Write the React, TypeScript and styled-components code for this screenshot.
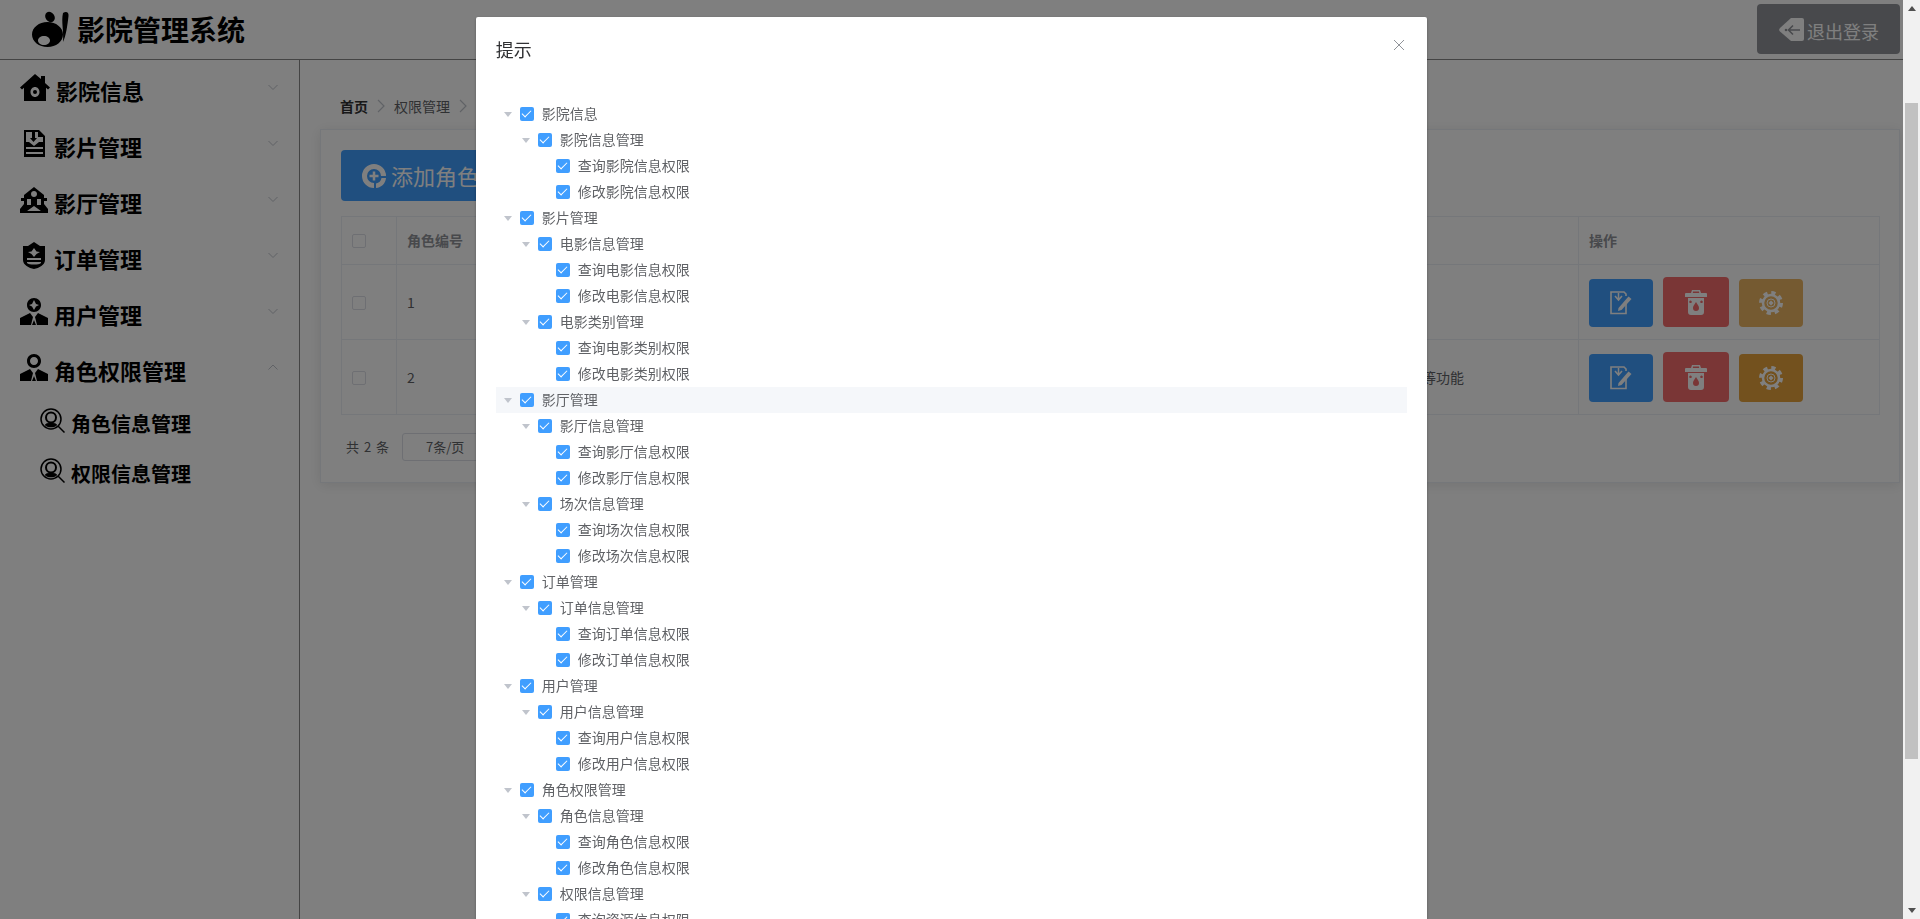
import React, { useLayoutEffect, useRef } from 'react';
import styled, { createGlobalStyle } from 'styled-components';

const Global = createGlobalStyle`
  html, body { margin: 0; padding: 0; height: 100%; overflow: hidden; background: #fff; }
  body { font-family: "Noto Sans CJK SC", "Liberation Sans", sans-serif; }
  * { box-sizing: border-box; }
`;

const Page = styled.div`
  width: 1903px;
  height: 100vh;
  display: flex;
  flex-direction: column;
  overflow: hidden;
`;
const Header = styled.header`
  height: 60px;
  flex: none;
  display: flex;
  align-items: center;
  justify-content: space-between;
  padding: 0 3px 1px 32px;
  border-bottom: 1px solid #888;
`;
const Brand = styled.div`
  display: flex;
  align-items: center;
  gap: 8px;
  font-size: 28px;
  font-weight: 700;
  color: #000;
`;
const BrandText = styled.span`
  line-height: 36px;
  margin-top: -1px;
`;
const LogoutButton = styled.button`
  width: 143px;
  height: 50px;
  border: 0;
  border-radius: 4px;
  background: #909399;
  color: #fff;
  font: 18px "Noto Sans CJK SC", sans-serif;
  display: flex;
  align-items: center;
  justify-content: center;
  gap: 3px;
  padding: 0 0 0 1px;
`;
const LogoutLabel = styled.span`
  padding-top: 3px;
`;
const Body = styled.div`
  flex: 1;
  display: flex;
  min-height: 0;
`;
const Sidebar = styled.nav`
  width: 300px;
  flex: none;
  border-right: 1px solid #888;
`;
const MenuItem = styled.div`
  height: 56px;
  display: flex;
  align-items: center;
  padding: 0 19px 0 20px;
  color: #000;
  font-size: 22px;
  font-weight: 700;
`;
const SubItem = styled.div`
  height: 50px;
  display: flex;
  align-items: center;
  padding-left: 40px;
  color: #000;
  font-size: 20px;
  font-weight: 700;
`;
const IconSlot = styled.span<{ $w: number; $ml?: number }>`
  width: ${p => p.$w}px;
  margin-left: ${p => p.$ml ?? 0}px;
  flex: none;
  display: flex;
  align-items: center;
  margin-top: -1px;
`;
const Label = styled.span`
  flex: 1;
  padding-top: 3px;
  line-height: 30px;
  white-space: nowrap;
`;
const SubLabel = styled(Label)`
  padding-top: 5px;
`;
const Chevron = styled.svg`
  width: 14px;
  height: 14px;
  flex: none;
  fill: none;
  stroke: #c0c4cc;
  stroke-width: 1;
  margin-top: -3px;
`;
const Main = styled.main`
  flex: 1;
  min-width: 0;
  padding: 36px 3px 0 20px;
`;
const Breadcrumb = styled.div`
  display: flex;
  align-items: center;
  height: 20px;
  padding-left: 20px;
  margin-bottom: 13px;
  font-size: 14px;
  color: #606266;
`;
const Crumb = styled.span<{ $strong?: boolean }>`
  color: ${p => (p.$strong ? '#303133' : '#606266')};
  font-weight: ${p => (p.$strong ? 700 : 400)};
`;
const CrumbSep = styled.svg`
  width: 14px;
  height: 14px;
  margin: 0 6px;
  fill: none;
  stroke: #c0c4cc;
  stroke-width: 1.2;
`;
const Card = styled.section`
  height: 354px;
  border: 1px solid #ebeef5;
  background: #fff;
  padding: 20px;
  box-shadow: 0 2px 12px rgba(0, 0, 0, 0.1);
`;
const AddButton = styled.button`
  width: 170px;
  height: 51px;
  border: 0;
  border-radius: 4px;
  background: #409eff;
  color: #fff;
  font: 22px "Noto Sans CJK SC", sans-serif;
  display: flex;
  align-items: center;
  gap: 5px;
  padding: 0 0 0 21px;
  margin-bottom: 15px;
`;
const AddLabel = styled.span`
  padding-bottom: 2px;
`;
const Table = styled.table`
  width: 100%;
  table-layout: fixed;
  border-collapse: collapse;
  font-size: 14px;
  color: #606266;
  border: 1px solid #ebeef5;
`;
const HeadCell = styled.th`
  height: 48px;
  padding: 0 10px 2px;
  text-align: left;
  border: 1px solid #ebeef5;
  color: #909399;
  font-weight: 700;
  white-space: nowrap;
`;
const Cell = styled.td`
  height: 75px;
  padding: 0 10px;
  border: 1px solid #ebeef5;
  white-space: nowrap;
`;
const Box = styled.span<{ $drop?: number }>`
  display: block;
  width: 14px;
  height: 14px;
  margin-top: ${p => p.$drop ?? 0}px;
  border: 1px solid #dcdfe6;
  border-radius: 2px;
  background: #fff;
`;
const Actions = styled.div`
  display: flex;
  align-items: flex-end;
  gap: 10px;
`;
const ActionButton = styled.button<{ $bg: string; $w: number; $h: number }>`
  width: ${p => p.$w}px;
  height: ${p => p.$h}px;
  background: ${p => p.$bg};
  border: 0;
  border-radius: 4px;
  display: flex;
  align-items: center;
  justify-content: center;
  padding: 0;
`;
const Pager = styled.div`
  display: flex;
  align-items: center;
  margin-top: 18px;
  padding-left: 5px;
  font-size: 13px;
  color: #606266;
`;
const PagerTotal = styled.span`
  width: 56px;
  word-spacing: 2px;
  padding-bottom: 2px;
`;
const PagerSelect = styled.div`
  width: 100px;
  height: 28px;
  border: 1px solid #dcdfe6;
  border-radius: 3px;
  display: flex;
  align-items: center;
  padding: 0 0 2px 23px;
`;

const Overlay = styled.div`
  position: fixed;
  top: 0;
  left: 0;
  bottom: 0;
  right: 17px;
  background: rgba(0, 0, 0, 0.5);
  overflow-y: scroll;
  padding: 138px 0 56px;
`;
const ScrollRail = styled.div`
  position: fixed;
  top: 0;
  right: 0;
  bottom: 0;
  width: 17px;
  background: #f1f1f1;
  display: flex;
  flex-direction: column;
`;
const ScrollArrow = styled.div<{ $down?: boolean }>`
  height: 17px;
  flex: none;
  display: flex;
  align-items: center;
  justify-content: center;
  &::before {
    content: '';
    border-left: 4.5px solid transparent;
    border-right: 4.5px solid transparent;
    ${p => (p.$down ? 'border-top: 5px solid #505050;' : 'border-bottom: 5px solid #505050;')}
  }
`;
const ScrollTrack = styled.div`
  flex: 1;
  padding: 86px 2px 0;
`;
const ScrollThumb = styled.div`
  height: 656px;
  background: #c1c1c1;
`;
const Dialog = styled.div`
  width: 50%;
  margin: 0 auto;
  background: #fff;
  border-radius: 2px;
  box-shadow: 0 1px 3px rgba(0, 0, 0, 0.3);
`;
const DialogHeader = styled.div`
  height: 54px;
  padding: 20px 20px 10px;
  display: flex;
  align-items: center;
  justify-content: space-between;
`;
const DialogTitle = styled.span`
  font-size: 18px;
  line-height: 24px;
  color: #303133;
`;
const CloseIcon = styled.svg`
  width: 16px;
  height: 16px;
  stroke: #909399;
  stroke-width: 1;
  fill: none;
  margin: -9px 0 0 0;
`;
const DialogBody = styled.div`
  padding: 30px 20px;
`;
const TreeRow = styled.div<{ $level: number; $hover?: boolean }>`
  height: 26px;
  display: flex;
  align-items: center;
  padding-left: ${p => p.$level * 18}px;
  font-size: 14px;
  color: #606266;
  background: ${p => (p.$hover ? '#f5f7fa' : 'transparent')};
`;
const Caret = styled.span<{ $leaf?: boolean }>`
  width: 24px;
  flex: none;
  display: flex;
  justify-content: center;
  &::before {
    content: '';
    border-left: 4px solid transparent;
    border-right: 4px solid transparent;
    border-top: 5px solid ${p => (p.$leaf ? 'transparent' : '#c0c4cc')};
  }
`;
const TreeCheck = styled.span`
  position: relative;
  width: 14px;
  height: 14px;
  flex: none;
  border-radius: 2px;
  background: #409eff;
  margin-right: 8px;
  &::after {
    content: '';
    position: absolute;
    left: 4px;
    top: 1px;
    width: 4px;
    height: 8px;
    border: 1px solid #fff;
    border-left: 0;
    border-top: 0;
    transform: rotate(45deg);
  }
`;
const TreeText = styled.span`
  padding-bottom: 2px;
`;
const DialogFooter = styled.div`
  padding: 10px 20px 20px;
  display: flex;
  justify-content: flex-end;
  gap: 10px;
`;
const FooterButton = styled.button<{ $primary?: boolean }>`
  height: 40px;
  width: 98px;
  font: 14px "Noto Sans CJK SC", sans-serif;
  border-radius: 4px;
  border: 1px solid ${p => (p.$primary ? '#409eff' : '#dcdfe6')};
  background: ${p => (p.$primary ? '#409eff' : '#fff')};
  color: ${p => (p.$primary ? '#fff' : '#606266')};
`;

const Logo = () => (
  <svg width="37" height="36" viewBox="0 0 37 36" fill="#000">
    <path fillRule="evenodd" d="M15.5 11C24 11 31 16.500 31 23.500S24 36 15.500 36 0 30.500 0 23.500 7 11 15.500 11ZM12 25C8.700 25 6 27 6 29.500S8.700 34 12 34s6-2 6-4.500S15.300 25 12 25Z" />
    <ellipse cx="18" cy="6" rx="4.500" ry="5.500" transform="rotate(-35 18 6)" />
    <path d="M31 2C34 0 37 1 36.500 5 35.500 14 34 25 31 31 32 21 29 10 31 2Z" />
  </svg>
);
const HomeIcon = () => (
  <svg width="30" height="27" viewBox="0 0 30 27" fill="#000">
    <path fillRule="evenodd" d="M15 0 21 5V2H25V9L30 13.500 28 15.500 26 13.800V27H4V13.800L2 15.500 0 13.500ZM15 13C12.500 13 10.500 15.200 10.500 18S12.500 23 15 23 19.500 20.800 19.500 18 17.500 13 15 13Z" />
    <circle cx="15" cy="18" r="2" />
  </svg>
);
const DocIcon = () => (
  <svg width="21" height="27" viewBox="0 0 21 27" fill="#000">
    <path fillRule="evenodd" d="M0 0H15L21 6V27H0ZM2 2V12H5L10 16 15 12H19V7H14V2H11V8H13L9.500 12 6 8H8V2ZM2 17V19H19V17ZM2 22V24H19V22Z" />
  </svg>
);
const HallIcon = () => (
  <svg width="28" height="26" viewBox="0 0 28 26" fill="#000">
    <path fillRule="evenodd" d="M14 0 24 8V11H27V14H24V17L28 22V26H0V22L4 17V14H1V11H4V8ZM14 4C12.300 4 11 5.300 11 7S12.300 10 14 10 17 8.700 17 7 15.700 4 14 4ZM7 12V18H11V12ZM17 12V18H21V12ZM14 19 7 24H21Z" />
  </svg>
);
const ShieldIcon = () => (
  <svg width="24" height="27" viewBox="0 0 24 27" fill="#000">
    <path fillRule="evenodd" d="M12 0 18 4 23 4V18C23 23 17 26 12 27 7 26 1 23 1 18V4L6 4ZM12 6 9.500 9.500 6 10 9.500 12 12 15 14.500 12 18 10 14.500 9.500ZM5 16V18H19V16ZM5 20V21C7 23 17 23 19 21V20Z" />
  </svg>
);
const UserIcon = ({ star }: { star?: boolean }) => (
  <svg width="28" height="27" viewBox="0 0 28 27" fill="#000">
    <path
      fillRule="evenodd"
      d={
        star
          ? 'M14 0C18 0 21 3 21 7S18 14 14 14 7 11 7 7 10 0 14 0ZM14 2 12 6 9 7 12 8.500 14 12 16 8.500 19 7 16 6Z'
          : 'M14 0C18 0 21 3 21 7S18 14 14 14 7 11 7 7 10 0 14 0ZM14 3C11.500 3 10 5 10 7S11.500 11 14 11 18 9 18 7 16.500 3 14 3Z'
      }
    />
    <path d="M10 15 0 20V27H11L13 19ZM18 15 28 20V27H17L15 19ZM14 22 12 27H16Z" />
  </svg>
);
const SearchIcon = () => (
  <svg width="25" height="25" viewBox="0 0 25 25" fill="none" stroke="#000">
    <circle cx="11" cy="11" r="10" strokeWidth="1.500" />
    <circle cx="11" cy="9.500" r="5" strokeWidth="2" />
    <path d="M5 17C7 14 15 14 17 17L14 19H8Z" fill="#000" strokeWidth="0.500" />
    <path d="M18 18 24.500 24.500" strokeWidth="1.500" />
  </svg>
);
const ChevronDown = () => (
  <Chevron viewBox="0 0 14 14"><path d="M2.500 5 7 9.500 11.500 5" /></Chevron>
);
const ChevronUp = () => (
  <Chevron viewBox="0 0 14 14"><path d="M2.500 9.500 7 5 11.500 9.500" /></Chevron>
);
const ArrowTagIcon = () => (
  <svg width="25" height="26" viewBox="0 -2 25 26">
    <path fill="#fff" d="M12 0H23A2 2 0 0 1 25 2V21A2 2 0 0 1 23 23H12L1 13.500A2.500 2.500 0 0 1 1 10Z" />
    <circle cx="7" cy="12" r="1.300" fill="#909399" />
    <path d="M21 12H10M14 7.500 9.500 12 14 16.500" stroke="#909399" strokeWidth="1.600" fill="none" />
  </svg>
);
const AddIcon = () => (
  <svg width="24" height="24" viewBox="0 0 24 24">
    <path fill="#fff" fillRule="evenodd" d="M12 0A12 12 0 0 1 24 12H19A7 7 0 1 0 12 19V24A12 12 0 0 1 12 0Z" />
    <path fill="#fff" d="M14 24V19.500C17 19 19 17 19.500 14H24C23.500 19.500 19.500 23.500 14 24Z" />
    <path stroke="#fff" strokeWidth="2.500" d="M7.500 12H16.500M12 7.500V16.500" />
  </svg>
);
const EditIcon = () => (
  <svg width="23" height="24" viewBox="0 0 23 24" fill="none" stroke="#fff" strokeWidth="1.600">
    <path d="M16 13V22.500H1V1H14L16 3V5" />
    <path d="M5 5 8.500 9 12 5M8.500 2V9" strokeWidth="1.500" />
    <path d="M8.500 17 18.500 5.500 21.500 8 11.500 19 8 20Z" fill="#fff" stroke="none" />
  </svg>
);
const TrashIcon = () => (
  <svg width="22" height="25" viewBox="0 0 22 25" fill="#fff">
    <path d="M7 0H15L16 3H21A1 1 0 0 1 22 4V7H0V4A1 1 0 0 1 1 3H6ZM8 1.500 7.800 3H14.200L14 1.500Z" fillRule="evenodd" />
    <path fillRule="evenodd" d="M3 8H19V22A3 3 0 0 1 16 25H6A3 3 0 0 1 3 22ZM11 12C9.500 14.500 8 16 8 18A3 3 0 0 0 14 18C14 16 12.500 14.500 11 12ZM5.500 10.500A1.300 1.300 0 1 0 5.510 10.500ZM16.500 10.500A1.300 1.300 0 1 0 16.510 10.500Z" />
  </svg>
);
const GearIcon = () => (
  <svg width="24" height="24" viewBox="0 0 24 24" fill="none" stroke="#fff">
    <circle cx="12" cy="12" r="10" strokeWidth="4" strokeDasharray="4.100 3.750" />
    <circle cx="12" cy="12" r="8" strokeWidth="2.500" />
    <circle cx="12" cy="12" r="4" strokeWidth="1" />
    <path d="M12 9.500 14.500 12 12 14.500 9.500 12Z" fill="#fff" stroke="none" />
  </svg>
);

type Node = [number, string, boolean?];
const tree: Node[] = [
  [0, '影院信息'], [1, '影院信息管理'], [2, '查询影院信息权限', true], [2, '修改影院信息权限', true],
  [0, '影片管理'], [1, '电影信息管理'], [2, '查询电影信息权限', true], [2, '修改电影信息权限', true],
  [1, '电影类别管理'], [2, '查询电影类别权限', true], [2, '修改电影类别权限', true],
  [0, '影厅管理'], [1, '影厅信息管理'], [2, '查询影厅信息权限', true], [2, '修改影厅信息权限', true],
  [1, '场次信息管理'], [2, '查询场次信息权限', true], [2, '修改场次信息权限', true],
  [0, '订单管理'], [1, '订单信息管理'], [2, '查询订单信息权限', true], [2, '修改订单信息权限', true],
  [0, '用户管理'], [1, '用户信息管理'], [2, '查询用户信息权限', true], [2, '修改用户信息权限', true],
  [0, '角色权限管理'], [1, '角色信息管理'], [2, '查询角色信息权限', true], [2, '修改角色信息权限', true],
  [1, '权限信息管理'], [2, '查询资源信息权限', true], [2, '修改资源信息权限', true],
];

const menus = [
  { label: '影院信息', icon: <HomeIcon />, w: 36, ml: 0 },
  { label: '影片管理', icon: <DocIcon />, w: 30, ml: 4 },
  { label: '影厅管理', icon: <HallIcon />, w: 34, ml: 0 },
  { label: '订单管理', icon: <ShieldIcon />, w: 32, ml: 2 },
  { label: '用户管理', icon: <UserIcon star />, w: 34, ml: 0 },
];

const roles = [
  { id: 1, name: '超级管理员', desc: '拥有全部功能', warn: '#ebb563' },
  { id: 2, name: '普通管理员', desc: '拥有用户管理及权限管理等功能', warn: '#e6a23c' },
];

export default function App() {
  const overlay = useRef<HTMLDivElement>(null);
  useLayoutEffect(() => {
    if (overlay.current) overlay.current.scrollTop = 121;
  }, []);
  return (
    <>
      <Global />
      <Page>
        <Header>
          <Brand>
            <Logo />
            <BrandText>影院管理系统</BrandText>
          </Brand>
          <LogoutButton><ArrowTagIcon /><LogoutLabel>退出登录</LogoutLabel></LogoutButton>
        </Header>
        <Body>
          <Sidebar>
            {menus.map(m => (
              <MenuItem key={m.label}>
                <IconSlot $w={m.w} $ml={m.ml}>{m.icon}</IconSlot>
                <Label>{m.label}</Label>
                <ChevronDown />
              </MenuItem>
            ))}
            <MenuItem>
              <IconSlot $w={34}><UserIcon /></IconSlot>
              <Label>角色权限管理</Label>
              <ChevronUp />
            </MenuItem>
            <SubItem>
              <IconSlot $w={31}><SearchIcon /></IconSlot>
              <SubLabel>角色信息管理</SubLabel>
            </SubItem>
            <SubItem>
              <IconSlot $w={31}><SearchIcon /></IconSlot>
              <SubLabel>权限信息管理</SubLabel>
            </SubItem>
          </Sidebar>
          <Main>
            <Breadcrumb>
              <Crumb $strong>首页</Crumb>
              <CrumbSep viewBox="0 0 14 14"><path d="M4 1 10 7 4 13" /></CrumbSep>
              <Crumb>权限管理</Crumb>
              <CrumbSep viewBox="0 0 14 14"><path d="M4 1 10 7 4 13" /></CrumbSep>
              <Crumb>角色信息管理</Crumb>
            </Breadcrumb>
            <Card>
              <AddButton><AddIcon /><AddLabel>添加角色</AddLabel></AddButton>
              <Table>
                <colgroup>
                  <col width="55" />
                  <col width="284" />
                  <col width="577" />
                  <col width="321" />
                  <col width="301" />
                </colgroup>
                <thead>
                  <tr>
                    <HeadCell><Box $drop={2} /></HeadCell>
                    <HeadCell>角色编号</HeadCell>
                    <HeadCell>角色名称</HeadCell>
                    <HeadCell>角色描述</HeadCell>
                    <HeadCell>操作</HeadCell>
                  </tr>
                </thead>
                <tbody>
                  {roles.map(r => (
                    <tr key={r.id}>
                      <Cell><Box $drop={2} /></Cell>
                      <Cell>{r.id}</Cell>
                      <Cell>{r.name}</Cell>
                      <Cell>{r.desc}</Cell>
                      <Cell>
                        <Actions>
                          <ActionButton $bg="#409eff" $w={64} $h={48}><EditIcon /></ActionButton>
                          <ActionButton $bg="#f56c6c" $w={66} $h={50}><TrashIcon /></ActionButton>
                          <ActionButton $bg={r.warn} $w={64} $h={48}><GearIcon /></ActionButton>
                        </Actions>
                      </Cell>
                    </tr>
                  ))}
                </tbody>
              </Table>
              <Pager>
                <PagerTotal>共 2 条</PagerTotal>
                <PagerSelect>7条/页</PagerSelect>
              </Pager>
            </Card>
          </Main>
        </Body>
      </Page>
      <Overlay ref={overlay}>
        <Dialog>
          <DialogHeader>
            <DialogTitle>提示</DialogTitle>
            <CloseIcon viewBox="0 0 16 16"><path d="M3 3 13 13M13 3 3 13" /></CloseIcon>
          </DialogHeader>
          <DialogBody>
            {tree.map(([level, text, leaf], i) => (
              <TreeRow key={i} $level={level} $hover={i === 11}>
                <Caret $leaf={leaf} />
                <TreeCheck />
                <TreeText>{text}</TreeText>
              </TreeRow>
            ))}
          </DialogBody>
          <DialogFooter>
            <FooterButton>取消</FooterButton>
            <FooterButton $primary>确定</FooterButton>
          </DialogFooter>
        </Dialog>
      </Overlay>
      <ScrollRail>
        <ScrollArrow />
        <ScrollTrack><ScrollThumb /></ScrollTrack>
        <ScrollArrow $down />
      </ScrollRail>
    </>
  );
}
